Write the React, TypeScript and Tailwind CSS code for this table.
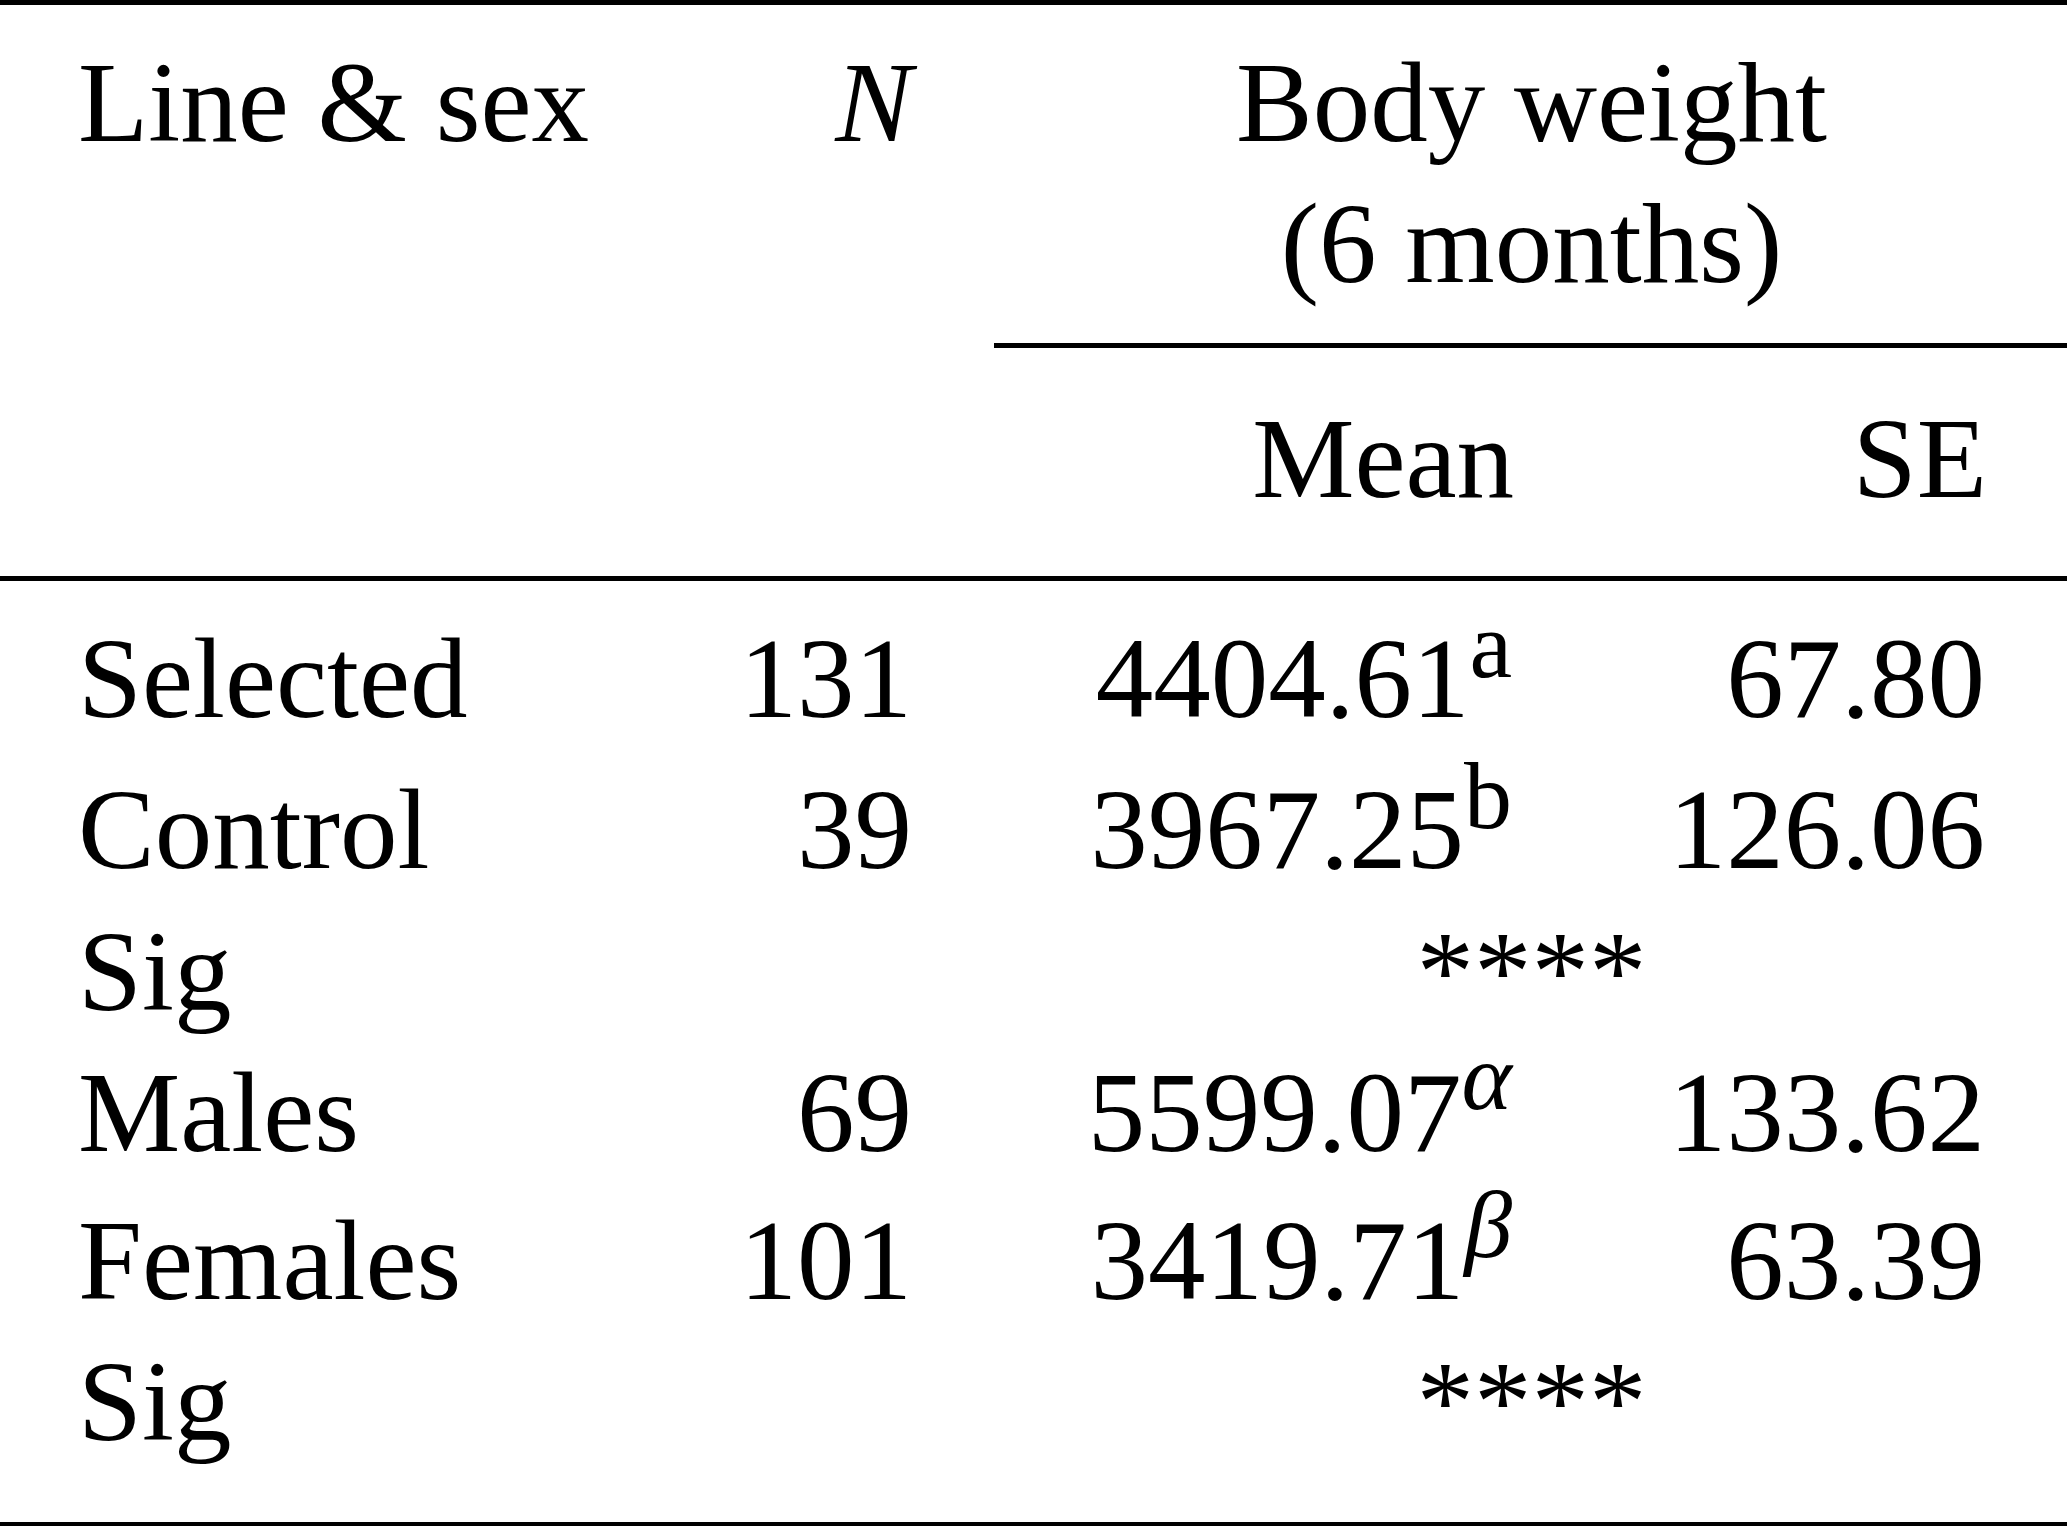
import * as React from 'react';

type Row = {
  label: string;
  n?: string;
  mean?: string;
  sup?: string;
  greek?: boolean;
  se?: string;
  sig?: boolean;
  pad: string;
};

const rows: Row[] = [
  { label: 'Selected', n: '131', mean: '4404.61', sup: 'a', se: '67.80', pad: 'pt-0' },
  { label: 'Control', n: '39', mean: '3967.25', sup: 'b', se: '126.06', pad: 'pt-[10px]' },
  { label: 'Sig', sig: true, pad: 'pt-[1px]' },
  { label: 'Males', n: '69', mean: '5599.07', sup: 'α', greek: true, se: '133.62', pad: 'pt-0' },
  { label: 'Females', n: '101', mean: '3419.71', sup: 'β', greek: true, se: '63.39', pad: 'pt-[7px]' },
  { label: 'Sig', sig: true, pad: 'pt-0' },
];

function Rule({ className = '' }: { className?: string }) {
  return <div className={`h-[5px] bg-black ${className}`} />;
}

export default function App() {
  return (
    <div className="w-[2067px] h-[1526px] bg-white text-black font-['Liberation_Serif','Times_New_Roman',serif] text-[115px] leading-[141px]">
      <Rule />

      {/* header: spanning title */}
      <div className="grid grid-cols-[680px_316px_1071px] pt-[27px] pb-[29px]">
        <div className="pl-[78px] whitespace-nowrap">Line &amp; sex</div>
        <div className="pr-[84px] text-right italic">N</div>
        <div className="text-center">
          Body weight
          <br />
          (6 months)
        </div>
      </div>
      <Rule className="ml-[994px]" />

      {/* header: sub columns */}
      <div className="grid grid-cols-[680px_316px_596px_475px] pt-[40px] pb-[47px]">
        <div />
        <div />
        <div className="pr-[78px] text-right">Mean</div>
        <div className="pr-[80px] text-right">SE</div>
      </div>
      <Rule />

      {/* body */}
      <div className="pt-[27px] pb-[50px]">
        {rows.map((r, i) => (
          <div key={i} className={`grid grid-cols-[680px_316px_596px_475px] ${r.pad}`}>
            <div className="pl-[78px] whitespace-nowrap">{r.label}</div>
            {r.sig ? (
              <>
                <div />
                <div className="col-span-2 text-center">****</div>
              </>
            ) : (
              <>
                <div className="pr-[84px] text-right">{r.n}</div>
                <div className="pr-[80px] text-right whitespace-nowrap">
                  {r.mean}
                  <span
                    className={
                      r.greek
                        ? 'relative -top-[42px] text-[96px] leading-[0] italic'
                        : 'relative -top-[40px] text-[96px] leading-[0]'
                    }
                  >
                    {r.sup}
                  </span>
                </div>
                <div className="pr-[82px] text-right">{r.se}</div>
              </>
            )}
          </div>
        ))}
      </div>
      <Rule />
    </div>
  );
}
